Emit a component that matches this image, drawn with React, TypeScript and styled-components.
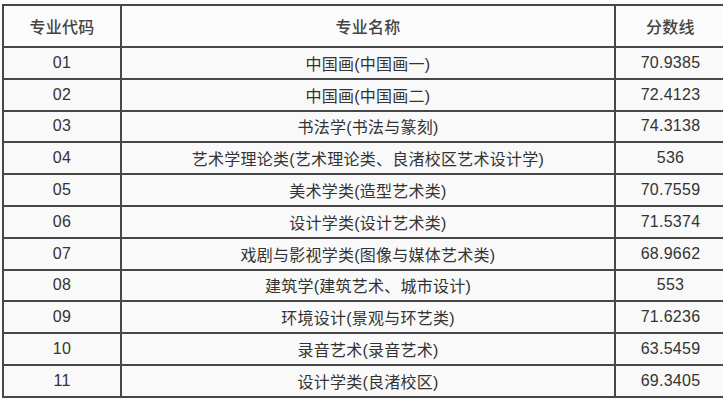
import React from 'react';
import styled, { createGlobalStyle } from 'styled-components';

const GlobalStyle = createGlobalStyle`
  html, body {
    margin: 0;
    padding: 0;
    background: #ffffff;
  }
  body {
    font-family: "Liberation Sans", "Noto Sans CJK SC", sans-serif;
  }
`;

const Page = styled.div`
  width: 723px;
  height: 400px;
  padding: 4px 0 0 2px;
  box-sizing: border-box;
  background: #fdfdfd;
`;

const ScoreTable = styled.table`
  width: 717px;
  border-collapse: collapse;
  table-layout: fixed;
  color: #333;
  font-size: 16px;
  letter-spacing: 0.25px;
`;

const HeadCell = styled.th<{ $w: number }>`
  width: ${p => p.$w}px;
  height: 40px;
  padding: 0;
  border: 2px solid #474747;
  font-weight: 500;
  color: #444;
  text-align: center;
  background: #fbfbfb;
`;

const Cell = styled.td`
  height: 29.8px;
  padding: 0;
  border: 2px solid #474747;
  text-align: center;
  background: #f9f9f9;
  white-space: nowrap;
`;

const rows = [
  ['01', '中国画(中国画一)', '70.9385'],
  ['02', '中国画(中国画二)', '72.4123'],
  ['03', '书法学(书法与篆刻)', '74.3138'],
  ['04', '艺术学理论类(艺术理论类、良渚校区艺术设计学)', '536'],
  ['05', '美术学类(造型艺术类)', '70.7559'],
  ['06', '设计学类(设计艺术类)', '71.5374'],
  ['07', '戏剧与影视学类(图像与媒体艺术类)', '68.9662'],
  ['08', '建筑学(建筑艺术、城市设计)', '553'],
  ['09', '环境设计(景观与环艺类)', '71.6236'],
  ['10', '录音艺术(录音艺术)', '63.5459'],
  ['11', '设计学类(良渚校区)', '69.3405'],
];

export default function App() {
  return (
    <>
      <GlobalStyle />
      <Page>
        <ScoreTable>
          <thead>
            <tr>
              <HeadCell $w={116}>专业代码</HeadCell>
              <HeadCell $w={492}>专业名称</HeadCell>
              <HeadCell $w={109}>分数线</HeadCell>
            </tr>
          </thead>
          <tbody>
            {rows.map(r => (
              <tr key={r[0]}>
                <Cell>{r[0]}</Cell>
                <Cell>{r[1]}</Cell>
                <Cell>{r[2]}</Cell>
              </tr>
            ))}
          </tbody>
        </ScoreTable>
      </Page>
    </>
  );
}
